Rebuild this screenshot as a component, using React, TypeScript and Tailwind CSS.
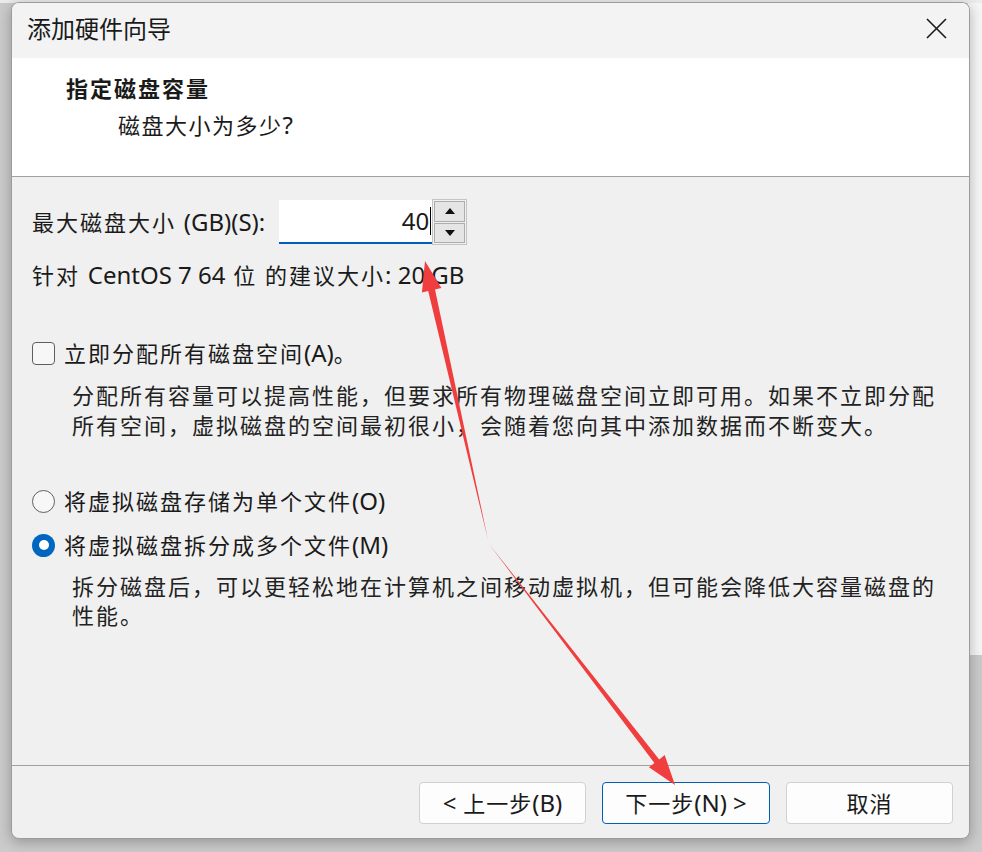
import type { ReactNode } from "react";

function L({ children }: { children: ReactNode }) {
  return <span className="text-[24px] tracking-normal">{children}</span>;
}

function Radio({ checked }: { checked?: boolean }) {
  if (checked) {
    return (
      <span className="flex h-[23px] w-[23px] shrink-0 items-center justify-center rounded-full bg-[#0067c0]">
        <span className="h-[10px] w-[10px] rounded-full bg-white" />
      </span>
    );
  }
  return <span className="h-[23px] w-[23px] shrink-0 rounded-full border border-[#5f5f5f] bg-[#f7f7f7]" />;
}

function Arrows() {
  return (
    <svg className="pointer-events-none absolute left-0 top-0" width="982" height="852" viewBox="0 0 982 852">
      <polygon
        fill="#f03e3e"
        points="425,261 441.4,288.1 435,289.5 488,540 428.2,291.1 421.9,292.5"
      />
      <polygon
        fill="#f03e3e"
        points="675,785 648.9,767.3 654.4,763 489,544 659.2,759.4 664.7,755.1"
      />
    </svg>
  );
}

export default function App() {
  return (
    <div className="relative h-[852px] w-[982px] overflow-hidden bg-[#cbcbcb] font-['Noto_Sans','Noto_Sans_CJK_SC',sans-serif] text-[#1a1a1a]">
      <div className="absolute right-0 top-0 h-[655px] w-[14px] bg-[#f6f6f6]" />
      <div className="absolute left-0 top-0 h-[3px] w-full bg-[#ececec]" />

      <div className="relative pl-[11px] pt-[2px]">
        <div className="flex h-[837px] w-[959px] flex-col overflow-hidden rounded-[8px] border border-[#9c9c9c] bg-[#f0f0f0] shadow-[0_3px_14px_rgba(0,0,0,0.28)]">
          {/* title bar */}
          <div className="flex h-[55px] shrink-0 items-center justify-between bg-[#f3f3f3] pb-[4px] pl-[15px] pr-[22px]">
            <span className="text-[24px] leading-none">添加硬件向导</span>
            <svg width="21" height="21" viewBox="0 0 21 21">
              <path d="M1 1 L20 20 M20 1 L1 20" stroke="#1a1a1a" strokeWidth="1.6" />
            </svg>
          </div>

          {/* header */}
          <div className="h-[119px] shrink-0 border-b border-[#a0a0a0] bg-white pt-[15px]">
            <div className="pl-[54px] text-[22px] font-bold leading-[30px] tracking-[2px]">指定磁盘容量</div>
            <div className="mt-[7px] pl-[106px] text-[22px] leading-[30px] tracking-[1.5px]">
              磁盘大小为多少<L>?</L>
            </div>
          </div>

          {/* body */}
          <div className="flex h-[589px] shrink-0 flex-col border-b border-[#a0a0a0] pl-[20px] pt-[23px] text-[22px] tracking-[2px]">
            <div className="flex h-[44px] items-center">
              <span className="leading-none">
                最大磁盘大小 <L>(GB)(S):</L>
              </span>
              <div className="ml-[14px] flex h-[44px] w-[153px] items-center justify-end border-b-2 border-[#005fb8] bg-white pr-[1px]">
                <span className="text-[24px] leading-none tracking-normal">40</span>
                <span className="ml-[1px] h-[28px] w-px bg-black" />
              </div>
              <div className="flex h-[46px] w-[35px] flex-col gap-px border border-[#c4c4c4] bg-[#f0f0f0] p-px">
                <button className="flex flex-1 items-center justify-center border border-[#adadad] bg-[#e5e5e5]">
                  <svg width="10" height="6" viewBox="0 0 10 6">
                    <polygon points="5,0 10,6 0,6" fill="#111" />
                  </svg>
                </button>
                <button className="flex flex-1 items-center justify-center border border-[#adadad] bg-[#e5e5e5]">
                  <svg width="10" height="6" viewBox="0 0 10 6">
                    <polygon points="0,0 10,0 5,6" fill="#111" />
                  </svg>
                </button>
              </div>
            </div>

            <div className="mt-[16px] leading-[30px]">
              针对 <L>CentOS 7 64</L> 位 的建议大小<L>: 20 GB</L>
            </div>

            <div className="mt-[48px] flex h-[30px] items-center gap-[9px]">
              <span className="h-[23px] w-[23px] shrink-0 rounded-[4px] border-[1.5px] border-[#5f5f5f] bg-[#f7f7f7]" />
              <span className="leading-[30px]">
                立即分配所有磁盘空间<L>(A)</L>。
              </span>
            </div>

            <div className="mt-[13px] pl-[40px] leading-[29.5px] text-[#222]">
              分配所有容量可以提高性能，但要求所有物理磁盘空间立即可用。如果不立即分配
              <br />
              所有空间，虚拟磁盘的空间最初很小，会随着您向其中添加数据而不断变大。
            </div>

            <div className="mt-[46px] flex h-[30px] items-center gap-[9px]">
              <Radio />
              <span className="leading-[30px]">
                将虚拟磁盘存储为单个文件<L>(O)</L>
              </span>
            </div>

            <div className="mt-[14px] flex h-[30px] items-center gap-[9px]">
              <Radio checked />
              <span className="leading-[30px]">
                将虚拟磁盘拆分成多个文件<L>(M)</L>
              </span>
            </div>

            <div className="mt-[12px] pl-[40px] leading-[29px] text-[#222]">
              拆分磁盘后，可以更轻松地在计算机之间移动虚拟机，但可能会降低大容量磁盘的
              <br />
              性能。
            </div>
          </div>

          {/* footer */}
          <div className="flex flex-1 items-start justify-end gap-[16px] pr-[16px] pt-[16px] text-[22px] tracking-[1px]">
            <button className="flex h-[42px] w-[167px] items-center justify-center rounded-[4px] border border-[#d0d0d0] bg-[#fdfdfd]">
              <L>&lt;</L>&nbsp;上一步<L>(B)</L>
            </button>
            <button className="flex h-[42px] w-[168px] items-center justify-center rounded-[4px] border border-[#005fb8] bg-[#fdfdfd]">
              下一步<L>(N) &gt;</L>
            </button>
            <button className="flex h-[42px] w-[167px] items-center justify-center rounded-[4px] border border-[#d0d0d0] bg-[#fdfdfd]">
              取消
            </button>
          </div>
        </div>
      </div>

      <Arrows />
    </div>
  );
}
